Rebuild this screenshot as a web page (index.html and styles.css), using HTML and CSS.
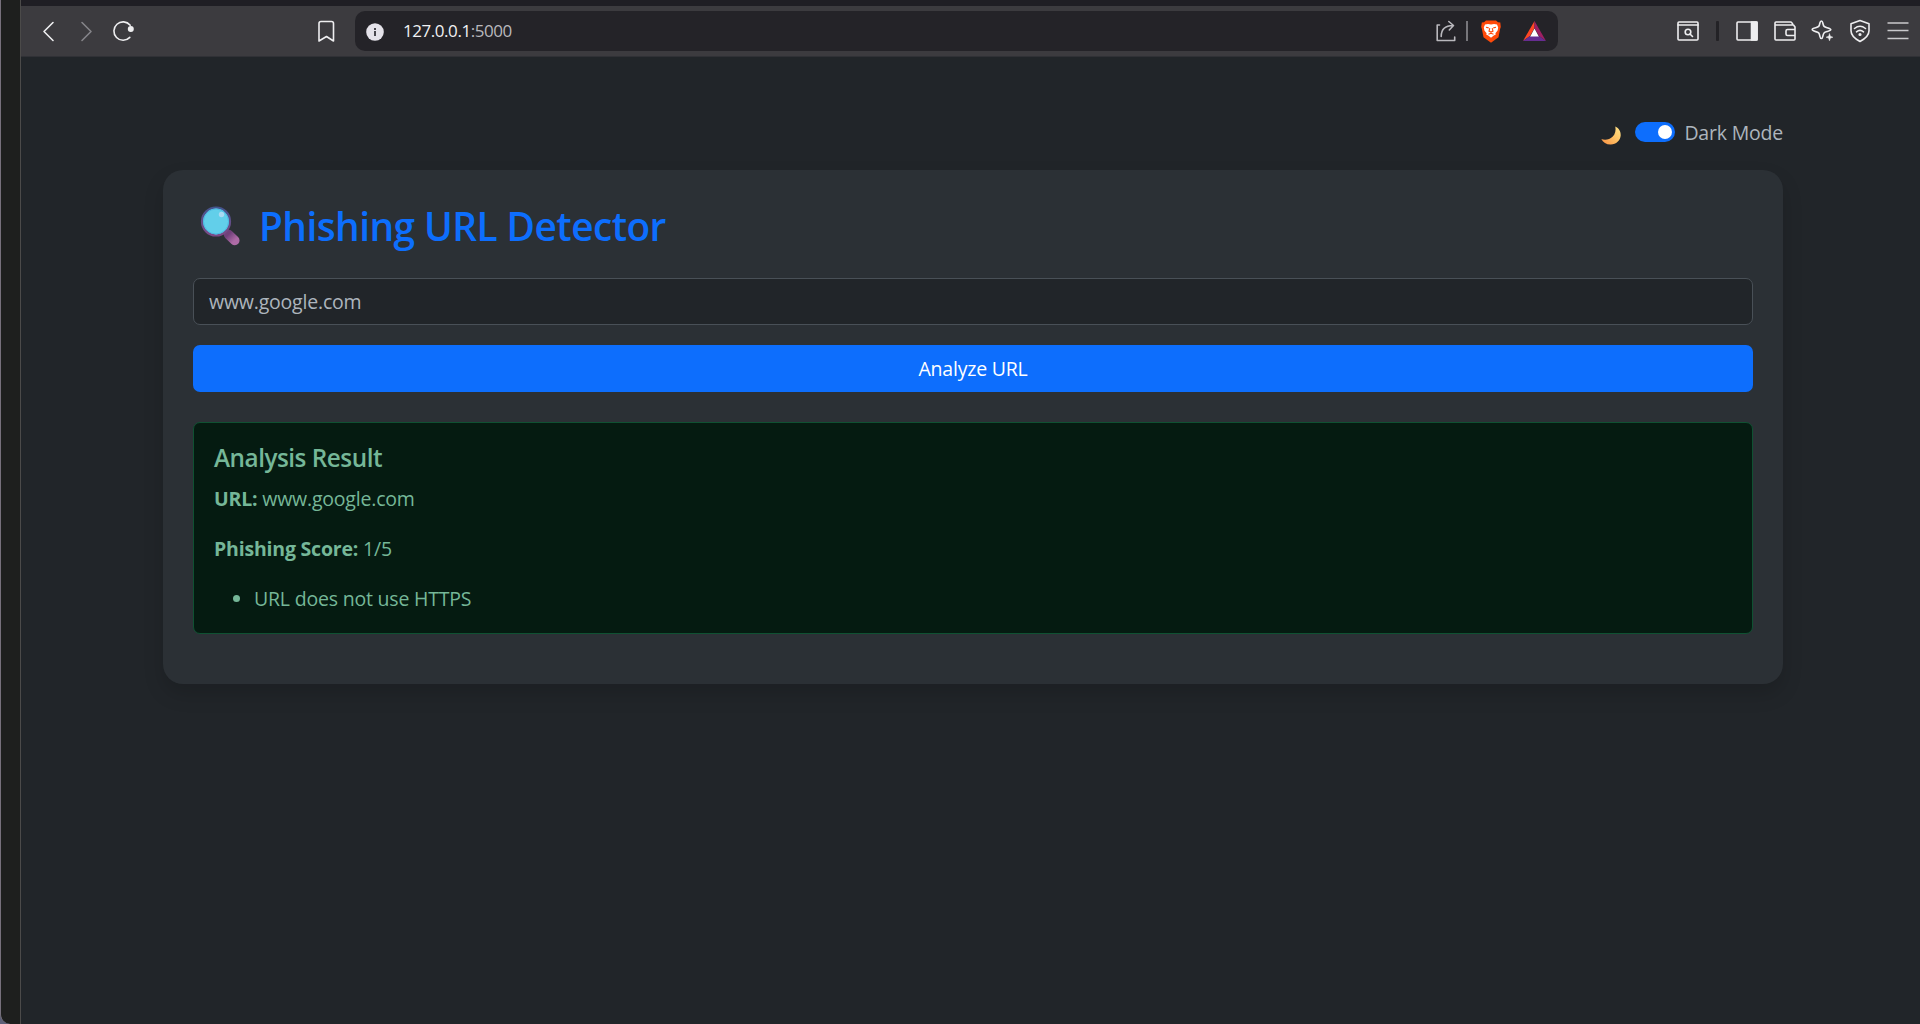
FILE: index.html
```html
<!DOCTYPE html>
<html lang="en">
<head>
<meta charset="utf-8">
<title>Phishing URL Detector</title>
<link rel="stylesheet" href="styles.css">
</head>
<body>
<div class="desktop">
  <aside class="behind"></aside>
  <div class="browser">
    <div class="tabstrip"></div>
    <header class="toolbar">
      <nav class="nav">
        <svg class="icon" viewBox="0 0 24 24"><path d="M17 3 8 12l9 9" transform="translate(0 .5)"/></svg>
        <svg class="icon dim" viewBox="0 0 24 24"><path d="m8 3 9 9-9 9" transform="translate(0 .5)"/></svg>
        <svg class="icon" viewBox="0 0 24 24"><path d="M17.800 18.400A9.200 9.200 0 1 1 18.200 6.200"/><circle class="solid" cx="18.800" cy="10" r="2.200"/></svg>
      </nav>
      <svg class="icon bookmark" viewBox="0 0 24 24"><path d="M7 2.500h10.500a2 2 0 0 1 2 2v17.500L12.500 17.500 5 22V4.500a2 2 0 0 1 2-2z"/></svg>
      <div class="address">
        <svg class="info" viewBox="0 0 18 18"><circle cx="9" cy="9" r="8.800"/><path d="M8 8h2v5H8zM8 5h2v2H8z"/></svg>
        <span class="host">127.0.0.1<span class="port">:5000</span></span>
        <svg class="icon share" viewBox="0 0 24 24"><path d="M5.500 6H3.200v15.500h17.500V18"/><path d="M7.200 17.500C7.200 11 11 6.500 19 6.500M14.800 2.500l4.700 4-4.200 4.500"/></svg>
        <i class="rule"></i>
        <svg class="brave" viewBox="0 0 20 23"><path fill="#ff4a0a" d="M5 .5h10l2 1.800 2.300.2.500 4.500-.7 2-1.600 8.300L10 22.800 2.500 17.300.9 9l-.7-2 .6-4.500L3 2.300z"/><path fill="#fff" d="m4 4.500 3-.6 3 .7 3-.7 3 .6 1.200 3-.6 3-2.200 2.700.4 1.400-2 1-2.800 2.100-2.800-2.100-2-1 .4-1.400L3.400 10.500l-.6-3z"/><path fill="none" stroke="#ff4a0a" stroke-width="1.100" d="m5 7.300 2.700.6M15 7.300l-2.700.6M8.800 8.200l-.8 2.900 2 1 2-1-.8-2.900M7.500 14.300l2.500-1 2.500 1"/></svg>
        <svg class="bat" viewBox="0 0 23 20"><path fill="#ff4724" d="M11.500 0v7L7 15l-7 5z"/><path fill="#9e1f63" d="M11.500 0v7l4.500 8 7 5z"/><path fill="#662d91" d="M0 20l7-5h9l7 5z"/><path fill="#fff" d="m11.500 7.500 4.300 8H7.200z"/></svg>
      </div>
      <div class="actions">
        <svg class="icon" viewBox="0 0 24 24"><rect x="2" y="3" width="20" height="18" rx="1"/><path d="M2 6h20"/><circle cx="12" cy="13" r="2.800"/><path d="m14 15 2.500 2.500"/></svg>
        <i class="sep"></i>
        <svg class="icon" viewBox="0 0 24 24"><rect x="2" y="3" width="20" height="18" rx="1"/><path class="solid" d="M16.500 3H22v18h-5.500z"/></svg>
        <svg class="icon" viewBox="0 0 24 24"><path d="M22 8v12a1 1 0 0 1-1 1H3a1 1 0 0 1-1-1V4a1 1 0 0 1 1-1h15l1.500 1.500V6M2 6h18.500L22 8M22 10.500h-7.500a1.500 1.500 0 0 0-1.500 1.500v3a1.500 1.500 0 0 0 1.500 1.500H22"/></svg>
        <svg class="icon" viewBox="0 0 24 24"><path d="M11.500 2c.8 0 1 .6 1.300 2 .8 3.500 1.200 4 4.200 4.700 2.500.6 3.800.9 3.800 1.900s-1.300 1.300-3.800 2c-3 .8-3.500 1.200-4.200 4.700-.3 1.500-.6 2.200-1.400 2.200-.9 0-1.200-.7-1.500-2.200-.7-3.500-1.200-4-4.200-4.700-2.400-.6-3.500-1-3.500-2s1.200-1.400 3.500-1.900c3-.7 3.500-1.200 4.200-4.700C10.200 2.600 10.600 2 11.500 2z"/><path class="solid" stroke-width=".5" d="m19.500 14.800.9 2.500 2.500.9-2.500.9-.9 2.700-.9-2.700-2.500-.9 2.500-.9z"/></svg>
        <svg class="icon" viewBox="0 0 24 24"><path d="m12 1.500 9 3.300v7c0 4.500-3.500 7.800-9 10.700-5.500-2.900-9-6.200-9-10.700v-7z"/><path d="M6.500 9.500q5.500-4.500 11 0M8.500 12.800q3.500-3 7 0"/><circle class="solid" cx="12" cy="15.500" r=".8"/></svg>
        <svg class="icon menu" viewBox="0 0 24 24"><path d="M1.500 4h21M1.500 11.500h21M1.500 19.500h21"/></svg>
      </div>
    </header>
    <main class="page">
      <div class="mode">
        <svg class="moon" viewBox="0 0 20 19"><defs><linearGradient id="mg" x1="0" y1="1" x2="1" y2="0"><stop offset="0" stop-color="#f98f42"/><stop offset=".6" stop-color="#ffc869"/><stop offset="1" stop-color="#ffe58a"/></linearGradient></defs><path fill="url(#mg)" d="M14.300.4C18 2 20 5.500 19.700 9.600c-.4 5-4.500 8.900-9.900 9C5.500 18.700 2 16.700.3 13.100c3.900 1.200 8.300.5 11.200-2.300 2.800-2.800 3.600-6.600 2.800-10.400z"/></svg>
        <span class="switch"></span>
        <label class="mode-label">Dark Mode</label>
      </div>
      <section class="card">
        <h2 class="title">
          <svg class="lens" viewBox="0 0 40 42"><defs><linearGradient id="lg" x1="0" y1="0" x2="0" y2="1"><stop offset="0" stop-color="#44548d"/><stop offset="1" stop-color="#7d4a87"/></linearGradient><linearGradient id="hg" x1="0" y1="0" x2="1" y2="1"><stop offset="0" stop-color="#71417b"/><stop offset="1" stop-color="#ae6ba6"/></linearGradient></defs><path stroke="url(#hg)" stroke-width="9.500" stroke-linecap="round" d="m28.500 29.500 6.300 6"/><circle cx="16" cy="16.500" r="14" fill="#62cfea" stroke="url(#lg)" stroke-width="2.200"/><circle cx="16" cy="16.500" r="12.500" fill="none" stroke="#4bbbe3" stroke-width="1"/><circle cx="21.500" cy="9.500" r="2.700" fill="#a9d9f2"/></svg>
          <span>Phishing URL Detector</span>
        </h2>
        <div class="field">www.google.com</div>
        <button class="analyze">Analyze URL</button>
        <div class="result">
          <h4 class="result-title">Analysis Result</h4>
          <p><strong>URL:</strong> www.google.com</p>
          <p><strong>Phishing Score:</strong> 1/5</p>
          <ul><li>URL does not use HTTPS</li></ul>
        </div>
      </section>
    </main>
  </div>
</div>
</body>
</html>
```
FILE: styles.css
```css
* { box-sizing: border-box; }
body { margin: 0; height: 1024px; overflow: hidden; background: #212529; color: #adb5bd; font: 19.5px/30px "Open Sans", "Noto Sans", sans-serif; letter-spacing: -.2px; }
.desktop { display: flex; height: 1024px; background: #5c6078; }
.behind { width: 20px; flex: none; background: #1e1f1e; border-left: 1px solid #77707c; border-bottom-left-radius: 10px; }
.browser { flex: 1; min-width: 0; display: flex; flex-direction: column; border-left: 1px solid #4b4a49; background: #212529; }
.tabstrip { height: 6px; background: #1f1e24; }
.toolbar { height: 51px; padding: 0 10.5px 0 15px; display: flex; align-items: center; background: #3c3b3f; border-bottom: 1px solid #303136; }
.icon { width: 24px; height: 24px; flex: none; fill: none; stroke: #eeeef0; stroke-width: 1.6; stroke-linejoin: round; stroke-linecap: round; }
.icon .solid { fill: #eeeef0; }
.dim { stroke: #858489; }
.nav { display: flex; gap: 14px; width: 278px; }
.bookmark { margin-right: 17px; }
.address { width: 1203px; height: 40px; padding: 0 12px 0 11px; display: flex; align-items: center; border-radius: 10px; background: #242328; }
.info { width: 18px; height: 18px; margin: 1px 19px 0 0; }
.info circle { fill: #e4e2e9; }
.info path { fill: #47464c; }
.host { margin-right: auto; color: #f1f1f3; font-size: 17px; letter-spacing: -.45px; }
.port { color: #b9b8bd; }
.share { stroke: #b9b8bd; }
.rule { width: 2px; height: 20px; margin: 0 13px 0 8px; background: #77767b; }
.brave { width: 20px; height: 23px; margin-right: 22px; }
.bat { width: 23px; height: 20px; }
.actions { margin-left: auto; display: flex; align-items: center; gap: 13.6px; }
.sep { width: 3px; height: 20px; margin: 0 2.5px; background: #232226; border-radius: 1px; }
.menu { stroke-linecap: butt; stroke: #c9c9cc; }
.page { width: 1620px; margin-left: 142px; padding-top: 61px; }
.mode { display: flex; align-items: center; justify-content: flex-end; height: 30px; margin-bottom: 22px; }
.moon { width: 20px; height: 19px; margin: 4px 13.5px 0 0; }
.switch { width: 40px; height: 20px; margin: -2px 9.5px 0 0; display: flex; justify-content: flex-end; align-items: center; padding-right: 3px; border-radius: 10px; background: #0d6efd; }
.switch::before { content: ""; width: 14px; height: 14px; border-radius: 50%; background: #fff; }
.card { height: 514px; padding: 30px; border-radius: 20px; background: #2b3035; box-shadow: 0 10px 20px rgba(0, 0, 0, .15); }
.title { height: 48px; padding-top: 3px; margin: 0 0 30px; display: flex; align-items: center; color: #0d6efd; font-size: 38.8px; line-height: 48px; font-weight: 600; letter-spacing: -.54px; }
.lens { width: 40px; height: 42px; margin: 0 19px 0 7px; fill: none; }
.field { height: 47px; margin-bottom: 20px; padding: 8px 15px; border: 1px solid #495057; border-radius: 7px; background: #212529; }
.analyze { display: block; width: 100%; height: 47px; padding: 0; margin-bottom: 30px; border: 0; border-radius: 7px; background: #0d6efd; color: #fff; font: inherit; letter-spacing: inherit; }
.result { height: 212px; padding: 20px; border: 1px solid #0f5132; border-radius: 7px; background: #051b11; color: #75b798; }
.result-title { margin: 0 0 11px; font-size: 24.3px; line-height: 30px; font-weight: 600; letter-spacing: -.48px; }
.result p { margin: 0 0 20px; }
.result ul { margin: 0; padding-left: 40px; }
```
